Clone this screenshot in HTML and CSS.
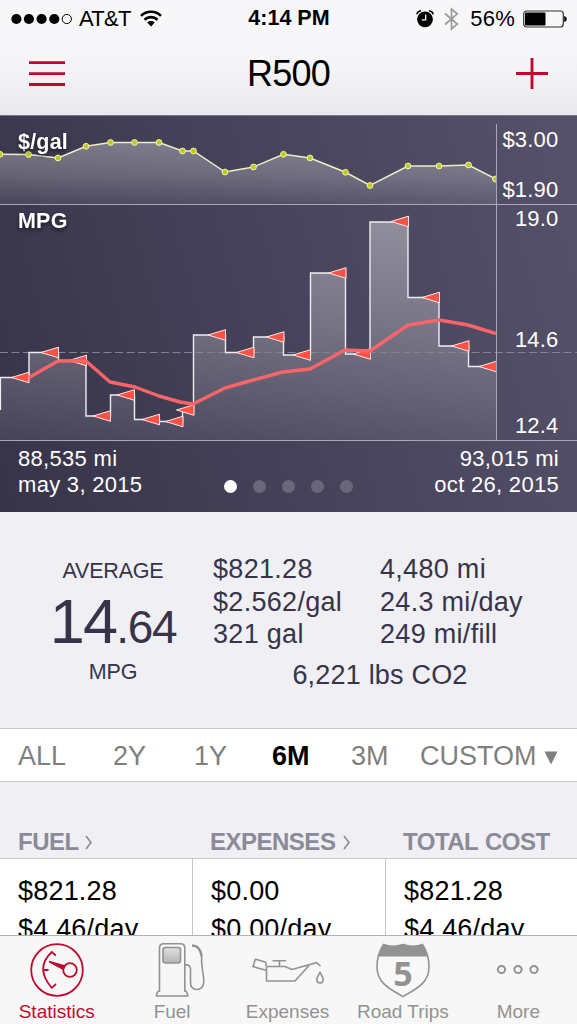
FILE: index.html
```html
<!DOCTYPE html>
<html lang="en">
<head>
    <meta charset="UTF-8">
    <meta name="viewport" content="width=device-width, initial-scale=1.0">
    <title>R500</title>
    <link rel="stylesheet" href="styles.css">
</head>
<body>
    <header class="header">
        <div class="status-bar">
            <div class="status-left">
                <svg width="61" height="12" viewBox="0 0 61 12">
                    <circle cx="5.4" cy="6" r="5.1"/>
                    <circle cx="17.9" cy="6" r="5.1"/>
                    <circle cx="30.6" cy="6" r="5.1"/>
                    <circle cx="43.3" cy="6" r="5.1"/>
                    <circle cx="55.8" cy="6" r="4.6" fill="none" stroke="#000"/>
                </svg>
                <span class="carrier">AT&amp;T</span>
                <svg class="wifi" width="22" height="17" viewBox="0 0 22 17">
                    <path d="M11 16.5L7.2 12.6a5.6 5.6 0 0 1 7.6 0z"/>
                    <path d="M4.5 9.8a9.3 9.3 0 0 1 13 0M1 5.8a14.2 14.2 0 0 1 20 0" fill="none" stroke="#000" stroke-width="2.6"/>
                </svg>
            </div>
            <div class="clock">4:14 PM</div>
            <div class="status-right">
                <svg width="18" height="18" viewBox="0 0 18 18">
                    <circle cx="9" cy="9.3" r="7.9"/>
                    <path d="M.8 4.4Q1.4 1.2 5 .7M17.2 4.4Q16.6 1.2 13 .7" fill="none" stroke="#000" stroke-width="1.4"/>
                    <path d="M9.7 4.6v5.3H5.6" fill="none" stroke="#f7f7f9" stroke-width="1.3"/>
                </svg>
                <svg class="bluetooth" width="15" height="24" viewBox="0 0 15 24">
                    <path d="M1 6.5l12.2 10.6L7.5 22V2l5.7 4.8L1 17.5" fill="none" stroke="#999" stroke-width="1.7"/>
                </svg>
                <span class="battery-level">56%</span>
                <svg width="44" height="18" viewBox="0 0 44 18">
                    <rect x=".7" y="1" width="39.6" height="16" rx="3" fill="none" stroke="#333" stroke-width="1.2"/>
                    <rect x="2" y="2.4" width="20.5" height="13.2" rx="1"/>
                    <path d="M41.2 6q2.6.4 2.6 3t-2.6 3z"/>
                </svg>
            </div>
        </div>
        <div class="title-bar">
            <svg width="37" height="26" viewBox="0 0 37 26">
                <path d="M0 1.6h36M0 12.6h36M0 23.5h36" stroke="#bf0a30" stroke-width="2.8"/>
            </svg>
            <h1>R500</h1>
            <svg width="32" height="32" viewBox="0 0 32 32">
                <path d="M0 15.5h32M16 0v31" stroke="#bf0a30" stroke-width="2.9"/>
            </svg>
        </div>
    </header>

    <section class="chart">
        <svg class="chart-plot" width="577" height="326" viewBox="0 115 577 326">
            <defs>
                <linearGradient id="priceFill" gradientUnits="userSpaceOnUse" x1="0" y1="138" x2="0" y2="204">
                    <stop offset="0" stop-color="#fff" stop-opacity=".33"/>
                    <stop offset=".55" stop-color="#fff" stop-opacity=".22"/>
                    <stop offset="1" stop-color="#fff" stop-opacity=".07"/>
                </linearGradient>
                <linearGradient id="mpgFill" gradientUnits="userSpaceOnUse" x1="0" y1="222" x2="0" y2="440">
                    <stop offset="0" stop-color="#fff" stop-opacity=".38"/>
                    <stop offset=".5" stop-color="#fff" stop-opacity=".24"/>
                    <stop offset="1" stop-color="#fff" stop-opacity=".07"/>
                </linearGradient>
                <clipPath id="plotArea"><rect x="0" y="115" width="496" height="326"/></clipPath>
                <path id="flag" d="M0 -5.3V5.3L-17.5 0z" fill="#fb5245" stroke="#ffe6e4" stroke-width="1"/>
                <circle id="dot" r="2.9" fill="#bccb1c" stroke="#f3f1b4" stroke-width="1"/>
            </defs>

            <g clip-path="url(#plotArea)">
                <path d="M0 154.3L28.5 154.5 58 158 86 146.3 110.5 142.5H159L182.5 151h11L225 172l28.5-5 30-12.7L310 158l35.5 14.3L370 185.5 408 166h31l29.5-1 27.5 14V204H0z" fill="url(#priceFill)"/>
                <path class="price-line" d="M0 154.3L28.5 154.5 58 158 86 146.3 110.5 142.5H159L182.5 151h11L225 172l28.5-5 30-12.7L310 158l35.5 14.3L370 185.5 408 166h31l29.5-1 27.5 14"/>
                <use href="#dot" x="0" y="154.3"/>
                <use href="#dot" x="28.5" y="154.5"/>
                <use href="#dot" x="58" y="158"/>
                <use href="#dot" x="86" y="146.3"/>
                <use href="#dot" x="110.5" y="142.5"/>
                <use href="#dot" x="134.5" y="142.5"/>
                <use href="#dot" x="159" y="142.5"/>
                <use href="#dot" x="182.5" y="151"/>
                <use href="#dot" x="193.5" y="151"/>
                <use href="#dot" x="225" y="172"/>
                <use href="#dot" x="253.5" y="167"/>
                <use href="#dot" x="283.5" y="154.3"/>
                <use href="#dot" x="310" y="158"/>
                <use href="#dot" x="345.5" y="172.3"/>
                <use href="#dot" x="370" y="185.5"/>
                <use href="#dot" x="408" y="166"/>
                <use href="#dot" x="439" y="166"/>
                <use href="#dot" x="468.5" y="165"/>
                <use href="#dot" x="495.5" y="179"/>

                <path d="M0 440V377.5H29V352.5H58.5V360.5H86V416H110.5V395H134.5V419.5H159.5V421.5H182.5V410H193.5V335H225.5V352.5H253.5V337H283.5V355H310.5V273H345.5V354H370V222H408V297.5H439V346H468.5V366.5H496V440z" fill="url(#mpgFill)"/>
            </g>
            <path d="M0 352.5H577" stroke="#84828f" stroke-dasharray="8 3.5"/>
            <g clip-path="url(#plotArea)">
                <path class="mpg-line" d="M.4 410V377.5H29V352.5H58.5V360.5H86V416H110.5V395H134.5V419.5H159.5V421.5H182.5V410H193.5V335H225.5V352.5H253.5V337H283.5V355H310.5V273H345.5V354H370V222H408V297.5H439V346H468.5V366.5H496"/>
                <use href="#flag" x="29" y="377.5"/>
                <use href="#flag" x="58.5" y="352.5"/>
                <use href="#flag" x="86.5" y="360.5"/>
                <use href="#flag" x="110.5" y="416"/>
                <use href="#flag" x="134.5" y="395"/>
                <use href="#flag" x="159.5" y="419.5"/>
                <use href="#flag" x="183" y="421.5"/>
                <use href="#flag" x="194" y="410"/>
                <use href="#flag" x="225.5" y="335"/>
                <use href="#flag" x="254" y="352.5"/>
                <use href="#flag" x="284" y="337"/>
                <use href="#flag" x="310.5" y="355"/>
                <use href="#flag" x="346" y="273"/>
                <use href="#flag" x="370.5" y="354"/>
                <use href="#flag" x="408.5" y="221.5"/>
                <use href="#flag" x="439.5" y="297.5"/>
                <use href="#flag" x="469" y="346"/>
                <use href="#flag" x="496.5" y="366.5"/>
                <path class="average-line" d="M29 377.5L58 361H86L110 382 135 387 159 396 180 402 193 404 225 388 253 380 283 372 310 369 345 350 370 351 408 325 439 320 468 325 496 333.5"/>
            </g>

            <path d="M0 115.5H577" stroke="#77758a"/>
            <path d="M0 204.5H577M0 440.5H577M496.5 124V440" stroke="#a9a7b7"/>
            <g class="chart-name">
                <text x="18" y="149">$/gal</text>
                <text x="18" y="228">MPG</text>
            </g>
            <g class="scale">
                <text x="558.5" y="147">$3.00</text>
                <text x="558.5" y="196.5">$1.90</text>
                <text x="558.5" y="226">19.0</text>
                <text x="558.5" y="347">14.6</text>
                <text x="558.5" y="433">12.4</text>
            </g>
        </svg>
        <div class="chart-footer">
            <div>88,535 mi<br>may 3, 2015</div>
            <div class="pager">
                <span class="page active"></span>
                <span class="page"></span>
                <span class="page"></span>
                <span class="page"></span>
                <span class="page"></span>
            </div>
            <div class="chart-end">93,015 mi<br>oct 26, 2015</div>
        </div>
    </section>

    <section class="summary">
        <div class="average">
            <div class="average-label">AVERAGE</div>
            <div class="average-value">14<span>.64</span></div>
            <div class="average-label">MPG</div>
        </div>
        <div class="totals">
            <div>$821.28</div>
            <div>4,480 mi</div>
            <div>$2.562/gal</div>
            <div>24.3 mi/day</div>
            <div>321 gal</div>
            <div>249 mi/fill</div>
            <div class="co2">6,221 lbs CO2</div>
        </div>
    </section>

    <nav class="ranges">
        <span>ALL</span>
        <span>2Y</span>
        <span>1Y</span>
        <span class="selected">6M</span>
        <span>3M</span>
        <span class="custom">CUSTOM <svg width="14" height="14" viewBox="0 0 14 14"><path d="M.5.5h13L7 13.5z" fill="#7f7f7f"/></svg></span>
    </nav>

    <section class="costs">
        <div class="cost">
            <h2>FUEL <svg width="8" height="15" viewBox="0 0 8 15"><path d="M1 1l5 6.5L1 14" fill="none" stroke="#8b8a98" stroke-width="1.6"/></svg></h2>
            <div class="cost-values">$821.28<br>$4.46/day</div>
        </div>
        <div class="cost">
            <h2>EXPENSES <svg width="8" height="15" viewBox="0 0 8 15"><path d="M1 1l5 6.5L1 14" fill="none" stroke="#8b8a98" stroke-width="1.6"/></svg></h2>
            <div class="cost-values">$0.00<br>$0.00/day</div>
        </div>
        <div class="cost">
            <h2>TOTAL COST</h2>
            <div class="cost-values">$821.28<br>$4.46/day</div>
        </div>
    </section>

    <nav class="tab-bar">
        <div class="tab active">
            <svg width="56" height="58" viewBox="0 0 56 58" fill="none" stroke="#bf0a30" stroke-width="1.8">
                <circle cx="28" cy="29" r="25.8"/>
                <path d="M26.8 14.5L22.8 11Q5.5 27 22.8 46.8L27 43M14 29h5.5"/>
                <circle cx="41" cy="29" r="6.8"/>
                <path d="M20 20.5l16 4.5-1.8 3.2z" fill="#bf0a30" stroke-width="1.5"/>
            </svg>
            <span>Statistics</span>
        </div>
        <div class="tab">
            <svg width="56" height="58" viewBox="0 0 56 58" fill="none" stroke="#929292" stroke-width="1.6">
                <defs><linearGradient id="pump" x2="0" y2="1"><stop stop-color="#e1e1e1"/><stop offset="1" stop-color="#b4b4b4"/></linearGradient></defs>
                <path d="M15.5 50V7Q15.5 2.7 19.7 2.7H36.6Q40.8 2.7 40.8 7V50Q43.7 50.5 43.7 55H12.5Q12.5 50.5 15.5 50z"/>
                <rect x="19" y="6.5" width="17.5" height="15.5" rx="2.5" fill="url(#pump)"/>
                <path d="M41 24Q46.5 23 46.5 28.5V41Q46.5 48.5 52.8 48.5T59.8 41C59.8 31 57 28 57.6 15" />
                <path d="M48 4.5Q56 4.5 57.6 15" stroke-width="2.4"/>
            </svg>
            <span>Fuel</span>
        </div>
        <div class="tab">
            <svg width="72" height="58" viewBox="0 0 72 58" fill="none" stroke="#929292" stroke-width="1.6">
                <path d="M14.5 25.5H33L40 28.5 64.5 21.7 68.5 25M57 24.5L43 40H14.5V25.5M14 21.2L3.4 18.3 1 25.5 14.5 29.5M14 21.2V25M20.5 19.7H34M27.5 19.7V25.5"/>
                <path d="M68 31.5Q64.8 36.5 64.8 38.8A3.2 3.2 0 0 0 71.2 38.8Q71.2 36.5 68 31.5z"/>
            </svg>
            <span>Expenses</span>
        </div>
        <div class="tab">
            <svg width="56" height="58" viewBox="0 0 56 58">
                <path d="M8.5 3.4Q18 7 28 3.4 38 7 47.5 3.4 54 13 54 26C54 43 39 49 28 55.6 17 49 2 43 2 26Q2 13 8.5 3.4z" fill="#f8f8f8" stroke="#929292" stroke-width="1.6"/>
                <path d="M8.5 3.4Q18 7 28 3.4 38 7 47.5 3.4 51 9 52.7 15.5H3.3Q5 9 8.5 3.4z" fill="#929292"/>
                <text class="route" x="28" y="44.5">5</text>
            </svg>
            <span>Road Trips</span>
        </div>
        <div class="tab">
            <svg width="56" height="58" viewBox="0 0 56 58" fill="none" stroke="#929292" stroke-width="2">
                <circle cx="11.5" cy="28.5" r="3.6"/>
                <circle cx="28" cy="28.5" r="3.6"/>
                <circle cx="44" cy="28.5" r="3.6"/>
            </svg>
            <span>More</span>
        </div>
    </nav>
</body>
</html>
```
FILE: styles.css
```css
* {
    box-sizing: border-box;
}
body {
    margin: 0;
    width: 577px;
    height: 1024px;
    overflow: hidden;
    display: flex;
    flex-direction: column;
    background: #efeff4;
    color: #000;
    font-family: "Liberation Sans", Arial, sans-serif;
}
svg {
    flex: none;
}
.header {
    height: 115px;
    flex: none;
    background: linear-gradient(#f7f7f9 45%, #e9e9ed);
}
.status-bar {
    height: 37px;
    padding: 0 10px 0 11px;
    display: grid;
    grid-template-columns: 1fr auto 1fr;
    align-items: center;
    font-size: 22px;
}
.status-left, .status-right {
    display: flex;
    align-items: center;
}
.status-right {
    justify-content: flex-end;
}
.carrier {
    margin: 0 9px 0 7px;
    letter-spacing: -0.7px;
}
.wifi {
    margin-bottom: 1px;
}
.clock {
    font-weight: bold;
    font-size: 21.5px;
}
.bluetooth {
    margin: 0 11px 0 10px;
}
.battery-level {
    margin-right: 8px;
    letter-spacing: 0.2px;
}
.title-bar {
    height: 74px;
    padding: 0 29px;
    display: grid;
    grid-template-columns: 1fr auto 1fr;
    align-items: center;
}
.title-bar svg:last-child {
    justify-self: end;
}
h1 {
    margin: 0;
    font-size: 36px;
    font-weight: normal;
    letter-spacing: -0.8px;
}
.chart {
    height: 397px;
    flex: none;
    background: linear-gradient(75deg, #37344a, #56526b);
    color: #fff;
    font-size: 22px;
}
.chart-plot {
    display: block;
}
.price-line {
    fill: none;
    stroke: #efedc6;
    stroke-width: 1.5;
}
.mpg-line {
    fill: none;
    stroke: #eeeef2;
    stroke-width: 1.4;
}
.average-line {
    fill: none;
    stroke: #fb6468;
    stroke-width: 3.4;
    stroke-linejoin: round;
}
.chart-name {
    fill: #fff;
    font-size: 21.5px;
    font-weight: bold;
    letter-spacing: 0.2px;
    filter: drop-shadow(0 2px 2px rgba(0,0,0,0.6));
}
.scale {
    fill: #fff;
    text-anchor: end;
    letter-spacing: 0.2px;
}
.chart-footer {
    height: 71px;
    padding: 5px 18px 0;
    display: grid;
    grid-template-columns: 1fr auto 1fr;
    line-height: 26px;
    letter-spacing: 0.3px;
}
.chart-end {
    text-align: right;
}
.pager {
    display: flex;
    gap: 16px;
    padding-top: 34px;
}
.page {
    width: 13px;
    height: 13px;
    border-radius: 50%;
    background: #6a677c;
}
.page.active {
    background: #fff;
}
.summary {
    height: 216px;
    flex: none;
    display: flex;
    padding-top: 41px;
    color: #37344a;
}
.average {
    width: 213px;
    padding: 5px 0 0 13px;
    text-align: center;
}
.average-label {
    font-size: 21.5px;
    line-height: 26px;
    letter-spacing: -0.2px;
}
.average-value {
    height: 76px;
    margin-bottom: -1px;
    font-size: 63px;
    line-height: 74px;
    letter-spacing: -1.8px;
}
.average-value span {
    font-size: 46px;
    letter-spacing: -1.3px;
}
.totals {
    display: grid;
    grid-template-columns: 167px 1fr;
    grid-auto-rows: 32.5px;
    width: 334px;
    font-size: 27px;
    line-height: 33px;
    letter-spacing: 0.3px;
    align-content: start;
}
.co2 {
    grid-column: 1 / 3;
    padding-top: 8px;
    text-align: center;
    letter-spacing: 0.2px;
}
.ranges {
    height: 54px;
    flex: none;
    display: grid;
    grid-template-columns: 95px 81px 78px 79px 69px auto;
    align-items: center;
    padding: 2px 18px 0;
    background: #fff;
    border-top: 1px solid #c8c7cc;
    border-bottom: 1px solid #c8c7cc;
    color: #7f7f7f;
    font-size: 27px;
    white-space: nowrap;
}
.ranges .selected {
    color: #000;
    font-weight: bold;
}
.costs {
    height: 153px;
    flex: none;
    display: flex;
    overflow: hidden;
}
.cost {
    flex: 1 1 0;
}
.cost:nth-child(2) {
    flex-basis: 1px;
}
h2 {
    height: 77px;
    margin: 0;
    padding: 45px 0 0 18px;
    border-bottom: 1px solid #c8c7cc;
    color: #8b8a98;
    font-size: 24px;
    line-height: 30px;
    letter-spacing: -0.5px;
    word-spacing: 1px;
    white-space: nowrap;
}
.cost-values {
    height: 100px;
    padding: 14px 0 0 18px;
    background: #fff;
    border-left: 1px solid #c8c7cc;
    font-size: 27px;
    line-height: 37.5px;
    letter-spacing: 0.2px;
}
.cost:first-child .cost-values {
    border-left: none;
}
.tab-bar {
    height: 89px;
    flex: none;
    display: flex;
    background: #f7f7f7;
    border-top: 1px solid #b2b2b2;
    color: #929292;
    font-size: 19px;
}
.tab {
    flex: 1 1 0;
    display: flex;
    flex-direction: column;
    align-items: center;
    padding: 5px 2px 0 0;
}
.tab svg {
    overflow: visible;
}
.tab span {
    line-height: 25px;
}
.tab.active {
    color: #bf0a30;
}
.route {
    fill: #929292;
    font: bold 34px "Open Sans", sans-serif;
    text-anchor: middle;
}
```
